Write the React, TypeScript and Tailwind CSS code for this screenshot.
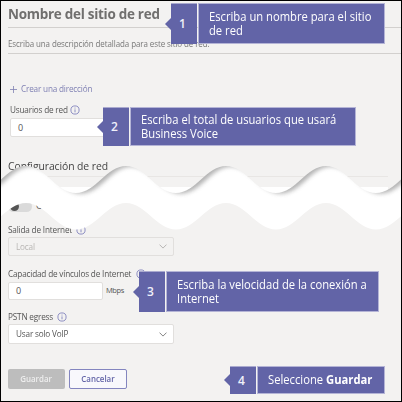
import type { ReactNode } from "react";

function Info({ className = "" }: { className?: string }) {
  return (
    <svg className={`h-[10px] w-[10px] shrink-0 ${className}`} viewBox="0 0 10 10" fill="none" stroke="#8284bd">
      <circle cx="5" cy="5" r="4.1" strokeWidth="0.9" />
      <path d="M5 4.4V7.3M5 2.6V3.5" strokeWidth="0.9" />
    </svg>
  );
}

function Chevron({ color }: { color: string }) {
  return (
    <svg className="h-[5px] w-[8px] shrink-0" viewBox="0 0 8 5" fill="none" stroke={color} strokeWidth="0.9">
      <path d="M.5.6 4 4.1 7.5.6" />
    </svg>
  );
}

/* Label set slightly condensed inside a column of fixed width. */
function Narrow({ className, children }: { className: string; children: ReactNode }) {
  return (
    <span className={`block shrink-0 ${className}`}>
      <span className="inline-block origin-left scale-x-[0.91] tracking-[-0.2px]">{children}</span>
    </span>
  );
}

function Callout({
  n,
  place,
  size,
  children,
}: {
  n: number;
  place: string;
  size: string;
  children: ReactNode;
}) {
  return (
    <div className={`absolute flex ${place}`}>
      <svg className="w-[6px] shrink-0 self-center" height="12" viewBox="0 0 6 12">
        <path d="M6 0V12L0 6Z" fill="#6264a7" />
      </svg>
      <div className="flex w-[26px] shrink-0 items-center justify-center border-t border-[#aaaacf] bg-[#6264a7] pr-[3px] text-[12px] font-semibold text-[#f0f0fa]">
        {n}
      </div>
      <div
        className={`ml-px flex items-center whitespace-nowrap border border-[#b4b4d6] bg-[#6264a7] pl-[10px] text-[12px] leading-[14px] text-white ${size}`}
      >
        <div className="origin-left scale-x-[0.935]">{children}</div>
      </div>
    </div>
  );
}

const EDGE =
  "M-24 193C-4 193 6 166 26 166S56 193 76 193S106 166 126 166S156 193 176 193S206 166 226 166S256 193 276 193S306 166 326 166S356 193 376 193S406 166 426 166";
const BAND =
  EDGE +
  "V203C406 203 396 229.500 376 229.500S346 203 326 203S296 229.500 276 229.500S246 203 226 203S196 229.500 176 229.500S146 203 126 203S96 229.500 76 229.500S46 203 26 203S-4 229.500 -24 229.500Z";

function TornBand() {
  return (
    <svg className="absolute left-0 top-0 h-[402px] w-[402px]" viewBox="0 0 402 402">
      <defs>
        <clipPath id="band">
          <path d={BAND} />
        </clipPath>
        <filter id="soft" x="-10%" y="-20%" width="120%" height="140%">
          <feGaussianBlur stdDeviation="2" />
        </filter>
      </defs>
      <path d={BAND} fill="#fff" />
      <g clipPath="url(#band)">
        <path d={EDGE + "V120H-24Z"} fill="#999" opacity=".75" transform="translate(5 0.5)" filter="url(#soft)" />
      </g>
    </svg>
  );
}

export default function App() {
  return (
    <div className="relative h-[402px] w-[402px] overflow-hidden border border-black bg-[#f3f2f1] font-['Open_Sans',sans-serif] text-[9px] text-[#555]">
      <div className="-ml-px -mt-px flex h-[402px] w-[402px] flex-col whitespace-nowrap pl-[8px]">
        <h1 className="h-[27px] pt-[4px] text-[14.5px] font-bold leading-[20px] tracking-[-0.3px] text-[#706f6e]">
          <span className="inline-block origin-left scale-x-[0.93]">Nombre del sitio de red</span>
        </h1>
        <div className="h-[26px] border-t border-[#d2d0ce] pt-[9px] leading-[14px] tracking-[-0.1px] text-[#777]">
          <span className="inline-block origin-left scale-x-[0.886]">
            Escriba una descripción detallada para este sitio de red.
          </span>
        </div>
        <div className="h-px shrink-0 bg-[#d2d0ce]" />
        <div className="mt-[28px] flex h-[14px] items-center gap-[4px] pl-[2px] leading-[14px] text-[#7f80b3]">
          <svg className="h-[7px] w-[7px]" viewBox="0 0 7 7" stroke="#7f80b3" strokeWidth="0.8">
            <path d="M3.5 0V7M0 3.5H7" />
          </svg>
          <Narrow className="w-[72px]">Crear una dirección</Narrow>
        </div>
        <div className="mt-[7px] flex h-[14px] items-center pl-[2px] leading-[14px]">
          <Narrow className="w-[60px]">Usuarios de red</Narrow>
          <Info />
        </div>
        <div className="ml-[2px] mt-px flex h-[19px] w-[98px] items-center rounded-[2px] border border-[#e1dfdd] bg-white pl-[7px]">
          0
        </div>
        <h2 className="mt-[19px] h-[20px] text-[11.5px] leading-[20px] tracking-[-0.1px] text-[#444]">
          <span className="inline-block origin-left scale-x-[0.905]">Configuración de red</span>
        </h2>
        <div className="h-px w-[380px] shrink-0 bg-[#e8e6e4]" />
        <div className="mt-[10px] h-[7px] w-[380px] shrink-0 bg-white" />
        <div className="mt-[6px] flex h-[12px] items-center gap-[4px]">
          <div className="flex h-[11px] w-[24px] items-center rounded-full bg-[#dadada] pl-[2px]">
            <div className="h-[9px] w-[9px] rounded-full bg-[#555]" />
          </div>
          <span className="leading-[12px]">C</span>
        </div>
        <div className="mt-[11px] flex h-[14px] items-center leading-[14px]">
          <Narrow className="w-[68px]">Salida de Internet</Narrow>
          <Info />
        </div>
        <div className="flex h-[19px] w-[166px] shrink-0 items-center justify-between rounded-[2px] border border-[#e1dfdd] pl-[7px] pr-[6px] text-[#b8b6b4]">
          <Narrow className="w-[30px]">Local</Narrow>
          <Chevron color="#b0aeac" />
        </div>
        <div className="mt-[11px] flex h-[14px] items-center leading-[14px]">
          <Narrow className="w-[128px]">Capacidad de vínculos de Internet</Narrow>
          <Info />
        </div>
        <div className="mt-px flex h-[18px] items-center">
          <div className="flex h-[18px] w-[95px] items-center rounded-[2px] border border-[#e1dfdd] bg-white pl-[7px]">0</div>
          <span className="pl-[3px] text-[7.5px] tracking-[-0.4px]">Mbps</span>
        </div>
        <div className="mt-[10px] flex h-[14px] items-center leading-[14px]">
          <Narrow className="w-[49px]">PSTN egress</Narrow>
          <Info />
        </div>
        <div className="flex h-[20px] w-[166px] shrink-0 items-center justify-between rounded-[2px] border border-[#e1dfdd] bg-white pl-[7px] pr-[6px]">
          <Narrow className="w-[60px]">Usar solo VoIP</Narrow>
          <Chevron color="#777" />
        </div>
        <div className="mt-[25px] flex gap-[4px] font-semibold">
          <button className="h-[20px] w-[57px] rounded-[2px] bg-[#bdbdbd] text-[#eee]">
            <span className="inline-block scale-x-[0.88]">Guardar</span>
          </button>
          <button className="h-[20px] w-[58px] rounded-[2px] border border-[#8385bf] bg-[#f8f8fc] text-[#6264a7]">
            <span className="inline-block scale-x-[0.88]">Cancelar</span>
          </button>
        </div>
      </div>
      <div className="absolute -left-px -top-px h-[402px] w-[402px]">
        <TornBand />
        <Callout n={1} place="left-[165px] top-[3px] h-[41px]" size="w-[187px]">
          Escriba un nombre para el sitio
          <br />
          de red
        </Callout>
        <Callout n={2} place="left-[97px] top-[107px] h-[39px]" size="w-[226px]">
          Escriba el total de usuarios que usará
          <br />
          Business Voice
        </Callout>
        <Callout n={3} place="left-[133px] top-[271px] h-[41px]" size="w-[213px]">
          Escriba la velocidad de la conexión a
          <br />
          Internet
        </Callout>
        <Callout n={4} place="left-[224px] top-[366px] h-[28px]" size="w-[128px]">
          Seleccione <b>Guardar</b>
        </Callout>
      </div>
    </div>
  );
}
